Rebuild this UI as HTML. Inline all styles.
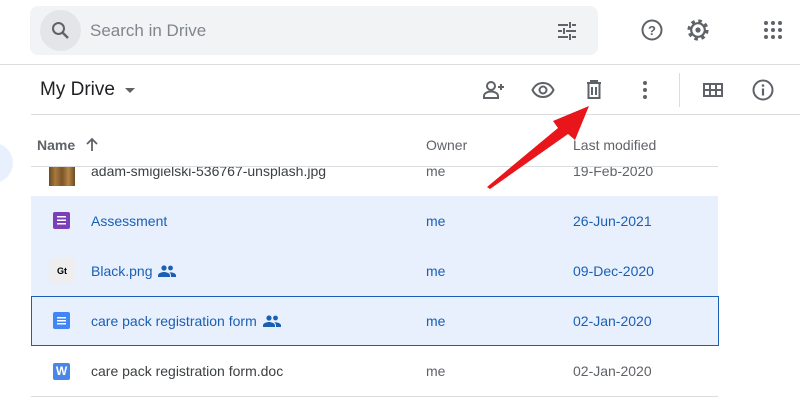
<!DOCTYPE html>
<html><head><style>
body{margin:0;width:800px;height:401px;overflow:hidden;background:#fff;font-family:"Liberation Sans",Arial,sans-serif;position:relative}
.a{position:absolute}
.t{font-size:14px;color:#3c4043}
.row{position:absolute;left:31px;width:687px;height:50px}
.nm{position:absolute;left:60px;top:17px;font-size:14px}
.ow{position:absolute;left:395px;top:17px;font-size:14px}
.dt{position:absolute;left:542px;top:17px;font-size:14px}
.sel .nm,.sel .ow,.sel .dt{color:#1a5fb4}
.pp{display:inline-block;vertical-align:-1px;margin-left:6px}
</style></head><body>
<div class="a" style="left:30px;top:6px;width:568px;height:49px;background:#f1f3f4;border-radius:8px"></div>
<div class="a" style="left:40px;top:10px;width:41px;height:41px;background:#e3e5e8;border-radius:50%"></div>
<svg class="a" style="left:49px;top:19px" width="24" height="24" viewBox="0 0 24 24"><circle cx="9.5" cy="9.5" r="5.5" fill="none" stroke="#5f6368" stroke-width="2"/><path d="M13.5 13.5L19 19" stroke="#5f6368" stroke-width="2.4"/></svg>
<div class="a" style="left:90px;top:21px;font-size:17px;color:#80868b">Search in Drive</div>
<svg class="a" style="left:555px;top:19px" width="24" height="24" viewBox="0 0 24 24" stroke="#5f6368" stroke-width="2" fill="none"><path d="M3 6h10M17 6h4M15 3v6M3 12h4M11 12h10M9 9v6M3 18h10M17 18h4M15 15v6"/></svg>
<svg class="a" style="left:640px;top:18px" width="24" height="24" viewBox="0 0 24 24"><circle cx="12" cy="12" r="9.5" fill="none" stroke="#5f6368" stroke-width="2"/><text x="12" y="17" font-size="13" font-weight="bold" text-anchor="middle" fill="#5f6368" font-family="Liberation Sans">?</text></svg>
<svg class="a" style="left:686px;top:18px" width="24" height="24" viewBox="0 0 24 24"><circle cx="12" cy="12" r="9" fill="none" stroke="#5f6368" stroke-width="3.2" stroke-dasharray="3.5 3.57"/><circle cx="12" cy="12" r="6.8" fill="none" stroke="#5f6368" stroke-width="2.2"/><circle cx="12" cy="12" r="2.6" fill="#5f6368"/></svg>
<svg class="a" style="left:763px;top:20px" width="20" height="20" viewBox="0 0 20 20" fill="#5f6368"><circle cx="3" cy="3" r="2"/><circle cx="10" cy="3" r="2"/><circle cx="17" cy="3" r="2"/><circle cx="3" cy="10" r="2"/><circle cx="10" cy="10" r="2"/><circle cx="17" cy="10" r="2"/><circle cx="3" cy="17" r="2"/><circle cx="10" cy="17" r="2"/><circle cx="17" cy="17" r="2"/></svg>
<div class="a" style="left:0;top:64px;width:800px;height:1px;background:#dadce0"></div>
<div class="a" style="left:40px;top:79px;font-size:19px;color:#202124">My Drive</div>
<div class="a" style="left:125px;top:88px;border:5px solid transparent;border-top-color:#5f6368;border-bottom:0"></div>
<svg class="a" style="left:481px;top:78px" width="26" height="24" viewBox="0 0 26 24" fill="none" stroke="#5f6368" stroke-width="2"><circle cx="10" cy="8" r="4"/><path d="M3 20v-2c0-3 4-4.5 7-4.5s7 1.5 7 4.5v2z"/><path d="M20 6v6M17 9h6"/></svg>
<svg class="a" style="left:531px;top:78px" width="24" height="24" viewBox="0 0 24 24" fill="none" stroke="#5f6368" stroke-width="2"><path d="M1.5 12C4 7 8 5 12 5s8 2 10.5 7C20 17 16 19 12 19S4 17 1.5 12z"/><circle cx="12" cy="12" r="3.5"/></svg>
<svg class="a" style="left:582px;top:78px" width="24" height="24" viewBox="0 0 24 24" fill="none" stroke="#5f6368" stroke-width="2"><path d="M5 5h14M9 5V3h6v2M6.5 5v15h11V5M10 9v8M14 9v8"/></svg>
<svg class="a" style="left:633px;top:78px" width="24" height="24" viewBox="0 0 24 24" fill="#5f6368"><circle cx="12" cy="5" r="2"/><circle cx="12" cy="12" r="2"/><circle cx="12" cy="19" r="2"/></svg>
<div class="a" style="left:679px;top:73px;width:1px;height:34px;background:#dadce0"></div>
<svg class="a" style="left:701px;top:78px" width="24" height="24" viewBox="0 0 24 24" fill="none" stroke="#5f6368" stroke-width="2"><path d="M3 6h18v12H3zM3 12h18M9 6v12M15 6v12"/></svg>
<svg class="a" style="left:751px;top:78px" width="24" height="24" viewBox="0 0 24 24"><circle cx="12" cy="12" r="9.5" fill="none" stroke="#5f6368" stroke-width="2"/><path d="M12 10.5v7" stroke="#5f6368" stroke-width="2.2"/><circle cx="12" cy="7.5" r="1.3" fill="#5f6368"/></svg>
<div class="a" style="left:31px;top:114px;width:769px;height:1px;background:#dadce0"></div>
<div class="a" style="left:-27px;top:143px;width:40px;height:40px;border-radius:50%;background:#e8f0fe"></div>
<div class="a" style="left:37px;top:137px;font-size:14px;color:#5f6368;font-weight:bold">Name</div>
<svg class="a" style="left:83px;top:136px" width="18" height="18" viewBox="0 0 18 18" stroke="#5f6368" stroke-width="1.8" fill="none"><path d="M9 15V3M4 8l5-5 5 5"/></svg>
<div class="a" style="left:426px;top:137px;font-size:14px;color:#5f6368">Owner</div>
<div class="a" style="left:573px;top:137px;font-size:14px;color:#5f6368">Last modified</div>
<div class="row" style="top:146px;height:50px;clip-path:inset(20px 0 0 0);border-bottom:1px solid #e8eaed">
<div class="a" style="left:18px;top:18px;width:26px;height:22px;background:linear-gradient(90deg,#6b4a22,#a77a3c,#7a5428,#b48546,#6b4a22)"></div>
<div class="nm t">adam-smigielski-536767-unsplash.jpg</div><div class="ow t" style="color:#5f6368">me</div><div class="dt t" style="color:#5f6368">19-Feb-2020</div></div>
<div class="a" style="left:31px;top:166px;width:687px;height:1px;background:#dadce0"></div>
<div class="row sel" style="top:196px;background:#e8f0fe">
<div class="a" style="left:22px;top:16px;width:17px;height:17px;background:#7b3fb8;border-radius:2px"></div>
<div class="a" style="left:26px;top:20px;width:9px;height:9px;background:repeating-linear-gradient(#fff 0 1.5px,transparent 1.5px 3.5px)"></div>
<div class="nm">Assessment</div><div class="ow">me</div><div class="dt">26-Jun-2021</div></div>
<div class="row sel" style="top:246px;background:#e8f0fe">
<div class="a" style="left:18px;top:12px;width:26px;height:26px;background:#eee;font-size:9px;font-weight:bold;line-height:26px;text-align:center">Gt</div>
<div class="nm">Black.png<svg class="pp" width="18" height="12" viewBox="0 0 18 12" fill="#1a5fb4"><circle cx="6" cy="3" r="2.6"/><circle cx="12.5" cy="3" r="2.4"/><path d="M0 12v-1.5C0 8 4 7 6 7s6 1 6 3.5V12zM13 12v-1.5c0-1.3-.6-2.3-1.6-3 .5-.1 1-.1 1.3-.1 2 0 5.3 1 5.3 3.1V12z"/></svg></div><div class="ow">me</div><div class="dt">09-Dec-2020</div></div>
<div class="row sel" style="top:296px;height:48px;background:#e8f0fe;border:1px solid #1a5fb4;left:31px;width:686px">
<div class="a" style="left:21px;top:15px;width:17px;height:17px;background:#4285f4;border-radius:2px"></div>
<div class="a" style="left:25px;top:20px;width:9px;height:8px;background:repeating-linear-gradient(#fff 0 1.5px,transparent 1.5px 3px)"></div>
<div class="nm" style="left:59px;top:16px">care pack registration form<svg class="pp" width="18" height="12" viewBox="0 0 18 12" fill="#1a5fb4"><circle cx="6" cy="3" r="2.6"/><circle cx="12.5" cy="3" r="2.4"/><path d="M0 12v-1.5C0 8 4 7 6 7s6 1 6 3.5V12zM13 12v-1.5c0-1.3-.6-2.3-1.6-3 .5-.1 1-.1 1.3-.1 2 0 5.3 1 5.3 3.1V12z"/></svg></div><div class="ow" style="left:394px;top:16px">me</div><div class="dt" style="left:541px;top:16px">02-Jan-2020</div></div>
<div class="row" style="top:346px;border-bottom:1px solid #dadce0">
<div class="a" style="left:22px;top:17px;width:17px;height:17px;background:#4a86e8;border-radius:2px;color:#fff;font-size:12px;font-weight:bold;text-align:center;line-height:17px">W</div>
<div class="nm t">care pack registration form.doc</div><div class="ow t" style="color:#5f6368">me</div><div class="dt t" style="color:#5f6368">02-Jan-2020</div></div>
<svg class="a" style="left:0;top:0" width="800" height="401"><path d="M487 187L558 128L553 121L589 106L575 140L568 134L490 189Z" fill="#e8151b"/></svg>
</body></html>
